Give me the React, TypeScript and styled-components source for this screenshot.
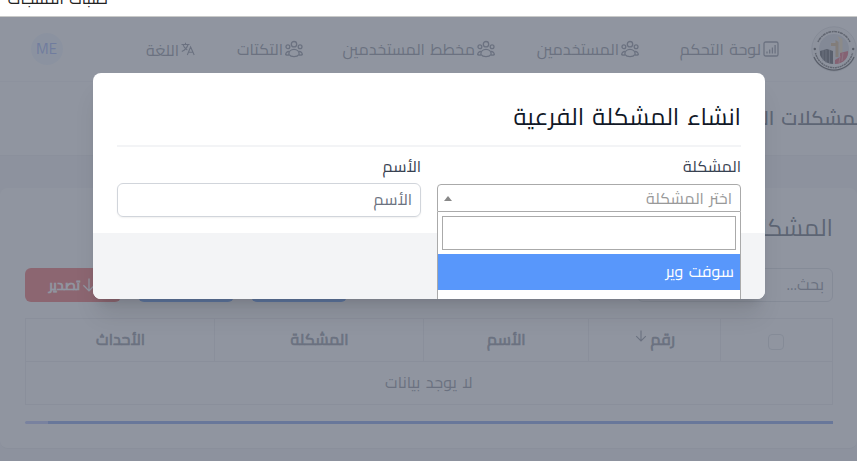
import React from "react";
import styled, { createGlobalStyle, css } from "styled-components";

const Global = createGlobalStyle`
  *, *::before, *::after { box-sizing: border-box; }
  html, body { margin: 0; padding: 0; overflow: hidden; background: #fff; }
  body { font-family: "Cairo", "DejaVu Sans", "Open Sans", sans-serif; font-size: 16px; color: #111827; }
`;

/* A one-line label in a box of fixed width, set against its right edge */
const LabelBox = styled.span<{ $w: number; $size: number; $dy: number }>`
  display: flex;
  flex: none;
  justify-content: flex-end;
  width: ${(p) => p.$w}px;
  font-size: ${(p) => p.$size}px;
  line-height: 24px;
  height: 24px;
  white-space: nowrap;
  word-spacing: 0.12em;
  margin-top: ${(p) => p.$dy}px;
`;
const LabelText = styled.span<{ $heavy?: boolean }>`
  flex: none;
  direction: rtl;
  -webkit-text-stroke: ${(p) => (p.$heavy ? "0.7px currentColor" : "0")};
`;
type LabelProps = { w: number; size?: number; dy?: number; heavy?: boolean; children: string };
function Label({ w, size = 16, dy = 0, heavy, children }: LabelProps) {
  return (
    <LabelBox $w={w} $size={size} $dy={dy}>
      <LabelText $heavy={heavy}>{children}</LabelText>
    </LabelBox>
  );
}

const Root = styled.div`
  width: 857px;
  height: 461px;
  overflow: hidden;
`;
const Strip = styled.div`
  height: 17px;
  overflow: hidden;
  padding-left: 7px;
  border-bottom: 1px solid #c9cac9;
  color: #222;
`;
const Stage = styled.div`
  position: relative;
  height: 444px;
  overflow: hidden;
  background: #f3f4f6;
  color: #6b7280;
`;
const Nav = styled.nav`
  height: 65px;
  display: flex;
  align-items: center;
  padding-left: 31px;
  background: #fff;
  border-bottom: 1px solid #f3f4f6;
`;
const Avatar = styled.div`
  width: 32px;
  height: 32px;
  border-radius: 50%;
  background: #ebf4ff;
  color: #7f9cf5;
  display: flex;
  align-items: center;
  justify-content: center;
`;
const NavItem = styled.div<{ $gap: number }>`
  display: flex;
  align-items: center;
  gap: 2px;
  margin-left: ${(p) => p.$gap}px;
  svg { flex: none; }
`;
const LogoSlot = styled.div`
  width: 46px;
  height: 48px;
  margin-left: 32px;
  svg { display: block; }
`;
const PageHead = styled.header`
  height: 74px;
  display: flex;
  align-items: center;
  background: #fff;
  padding-left: 721px;
  color: #374151;
  font-weight: 600;
  border-bottom: 1px solid #e9eaed;
`;
const Card = styled.section`
  margin-top: 32px;
  height: 261px;
  padding: 28px 24px 0 25px;
  background: #fff;
  border: solid #e5e7eb;
  border-width: 0 0 1px;
  border-radius: 8px;
`;
const CardTitle = styled.div`
  display: flex;
  justify-content: flex-end;
  height: 24px;
  color: #374151;
`;
const Tools = styled.div`
  display: flex;
  height: 34px;
  margin-top: 28px;
`;
const Button = styled.div<{ $red?: boolean }>`
  width: 96px;
  margin-right: 17px;
  border-radius: 6px;
  background: ${(p) => (p.$red ? "#ef4444" : "#3b82f6")};
  color: #fff;
  display: flex;
  align-items: center;
  padding-left: 21px;
  gap: 2px;
`;
const Search = styled.div`
  width: 196px;
  margin-left: auto;
  border: 1px solid #d1d5db;
  border-radius: 6px;
  display: flex;
  align-items: center;
  justify-content: flex-end;
  padding-right: 8px;
`;
const Table = styled.div`
  margin-top: 16px;
  border: 1px solid #e5e7eb;
`;
const Row = styled.div<{ $head?: boolean }>`
  display: grid;
  height: ${(p) => (p.$head ? 43 : 42)}px;
  ${(p) =>
    p.$head
      ? css`
          grid-template-columns: 189px 209px 165px 132px 1fr;
          border-bottom: 1px solid #e5e7eb;
        `
      : css`
          grid-template-columns: 1fr;
        `}
`;
const Cell = styled.div<{ $line?: boolean }>`
  display: flex;
  align-items: center;
  justify-content: center;
  gap: 2px;
  border-right: ${(p) => (p.$line ? "1px solid #e5e7eb" : "0")};
  svg { margin: -9px 0 0 1px; }
`;
const Check = styled.div`
  width: 16px;
  height: 16px;
  margin: 3px 1px 0 0;
  border: 1px solid #d1d5db;
  border-radius: 4px;
`;
const Progress = styled.div`
  height: 3px;
  margin-top: 16px;
  border-radius: 2px;
  background: #a5b4fc;
  padding-left: 23px;
`;
const Bar = styled.div`
  height: 3px;
  background: #6087e8;
`;
const Overlay = styled.div`
  position: absolute;
  inset: 0;
  background: rgba(107, 114, 128, 0.75);
`;
const Modal = styled.div`
  position: absolute;
  left: 93px;
  top: 56px;
  width: 672px;
  height: 226px;
  border-radius: 8px;
  box-shadow: 0 20px 25px -5px rgba(0, 0, 0, 0.1), 0 8px 10px -6px rgba(0, 0, 0, 0.1);
`;
const ModalInner = styled.div`
  position: relative;
  height: 226px;
  border-radius: 8px;
  overflow: hidden;
  background: #fff;
`;
const ModalBody = styled.div`
  height: 160px;
  padding: 32px 24px 0;
`;
const ModalTitle = styled.div`
  height: 42px;
  display: flex;
  justify-content: flex-end;
  border-bottom: 2px solid #f3f4f6;
  color: #111827;
`;
const Fields = styled.div`
  display: grid;
  grid-template-columns: 304px 304px;
  gap: 16px;
  padding-top: 7px;
`;
const Field = styled.div`
  display: flex;
  flex-direction: column;
  align-items: flex-end;
  color: #374151;
`;
const Input = styled.div`
  width: 304px;
  height: 34px;
  margin-top: 5px;
  border: 1px solid #d1d5db;
  border-radius: 6px;
  box-shadow: 0 1px 2px rgba(0, 0, 0, 0.06);
  display: flex;
  align-items: center;
  justify-content: flex-end;
  padding-right: 8px;
  color: #6b7280;
`;
const Select = styled.div`
  width: 304px;
  height: 28px;
  margin-top: 6px;
  border: 1px solid #aaa;
  border-radius: 4px 4px 0 0;
  display: flex;
  align-items: center;
  justify-content: space-between;
  padding: 0 8px 0 6px;
  color: #999;
`;
const Caret = styled.i`
  border: solid transparent;
  border-width: 0 4px 5px;
  border-bottom-color: #888;
`;
const ModalFoot = styled.div`
  height: 66px;
  background: #f3f4f6;
`;
const Dropdown = styled.div`
  position: absolute;
  left: 344px;
  top: 139px;
  width: 304px;
  height: 100px;
  background: #fff;
  border: 1px solid #aaa;
  border-top: 0;
`;
const DropSearch = styled.div`
  height: 34px;
  margin: 4px;
  border: 1px solid #aaa;
`;
const Option = styled.div`
  height: 36px;
  background: #5897fb;
  color: #fff;
  display: flex;
  align-items: center;
  justify-content: flex-end;
  padding-right: 6px;
`;

const Users = () => (
  <svg width="18" height="18" viewBox="0 0 18 18" fill="none" stroke="currentColor" strokeWidth="1.3">
    <circle cx="9" cy="4.200" r="2.700" />
    <circle cx="2.900" cy="6.800" r="1.900" />
    <circle cx="15.100" cy="6.800" r="1.900" />
    <path d="M3.800 14.400C3.800 11.200 6.200 9.300 9 9.300s5.200 1.900 5.200 5.100c-1.200 1.600-3 2.300-5.200 2.300s-4-.7-5.200-2.300Z" />
    <path d="M4.200 11.500C2.100 11.400.8 12.500.7 14.600c.9.500 2 .6 3.200.4M13.800 11.500c2.100-.1 3.400 1 3.500 3.100-.9.500-2 .6-3.200.4" />
  </svg>
);
const Chart = () => (
  <svg width="16" height="16" viewBox="0 0 16 16" fill="none" stroke="currentColor" strokeWidth="1.3">
    <rect x="1" y="1" width="14" height="14" rx="1.6" />
    <path d="M4 12.500v-2M6.700 12.500V8.500M9.400 12.500V6.500M12.100 12.500V4" />
  </svg>
);
const Translate = () => (
  <svg width="14" height="14" viewBox="0 0 14 14" fill="none" stroke="currentColor" strokeWidth="1.1">
    <path d="M.5 2.500h8M4.500.8v1.700M7 2.500C6.300 5.400 4 8 .8 9.600M2 2.700c.7 2.500 2.500 4.400 4.300 5.300M6.300 13l3.300-8 3.600 8M7.500 10.300h4.500" />
  </svg>
);
const Arrow = ({ s = 12 }: { s?: number }) => (
  <svg width={s} height={s} viewBox="0 0 12 12" fill="none" stroke="currentColor" strokeWidth="1.1">
    <path d="M6 .5v10.500M1.200 6.200 6 11l4.800-4.800" />
  </svg>
);
const Logo = () => (
  <svg width="46" height="48" viewBox="0 0 46 48">
    <circle cx="23" cy="24" r="22.200" fill="#f4f4f4" stroke="#c9cccf" strokeWidth=".8" />
    <path d="M3 32a21.800 21.800 0 0 0 40 0" fill="none" stroke="#222" strokeWidth="1.200" />
    <path d="M7 17a17.500 17.500 0 0 1 32 0" fill="none" stroke="#444" strokeWidth="1.500" strokeDasharray="1.800 .5 3 .7" />
    <path d="M4.500 28a19 19 0 0 0 37 0" fill="none" stroke="#444" strokeWidth="1.500" strokeDasharray="1.500 .6 2.200 .5" />
    <circle cx="23" cy="24" r="15" fill="#c9cdd6" />
    <path d="M19.500 37V18l5-3v23Z" fill="#d9d6d6" />
    <path d="M24.500 15l3 2v15h-3Z" fill="#c6a168" />
    <path d="M26.500 11l5 3v14h-3V15Z" fill="#ead3a2" />
    <path d="M9 26l7-2 6 2v13c-6 0-11-4-13-9Z" fill="#272a31" />
    <path d="M12 25v11M15 25v13M18.500 25v14" stroke="#8c9098" strokeWidth=".7" />
    <path d="M24 39v-4l5-3v-4l8-2c1 6-4 13-13 13Z" fill="#d3364b" />
    <path d="M28 38l1-7M31 36l1-8" stroke="#f3a5aa" strokeWidth=".7" />
    <path d="M20 18h5v3h-5Z" fill="#c6a168" />
    <circle cx="3.800" cy="24" r="1.200" fill="#222" />
    <circle cx="42.200" cy="24" r="1.200" fill="#222" />
  </svg>
);

export default function App() {
  return (
    <Root>
      <Global />
      <Strip><Label w={101} dy={-14}>طلبات المنتجات</Label></Strip>
      <Stage>
        <Nav>
          <Avatar><Label w={20} size={15} dy={-1}>ME</Label></Avatar>
          <NavItem $gap={84}><Label w={32} dy={2}>اللغة</Label><Translate /></NavItem>
          <NavItem $gap={41}><Label w={47}>التكتات</Label><Users /></NavItem>
          <NavItem $gap={40}><Label w={132}>مخطط المستخدمين</Label><Users /></NavItem>
          <NavItem $gap={41}><Label w={83}>المستخدمين</Label><Users /></NavItem>
          <NavItem $gap={41}><Label w={81}>لوحة التحكم</Label><Chart /></NavItem>
          <LogoSlot><Logo /></LogoSlot>
        </Nav>
        <PageHead><Label w={146} size={20} dy={-2}>المشكلات الفرعية</Label></PageHead>
        <Card>
          <CardTitle><Label w={176} size={24}>المشكلات الفرعية</Label></CardTitle>
          <Tools>
            <Button $red><Label w={34} size={14} dy={-1} heavy>تصدير</Label><Arrow s={14} /></Button>
            <Button />
            <Button />
            <Search><Label w={40} dy={-2}>بحث...</Label></Search>
          </Tools>
          <Table>
            <Row $head>
              <Cell $line><Label w={50} dy={-2} heavy>الأحداث</Label></Cell>
              <Cell $line><Label w={59} dy={-2} heavy>المشكلة</Label></Cell>
              <Cell $line><Label w={39} dy={-2} heavy>الأسم</Label></Cell>
              <Cell $line><Arrow /><Label w={26} dy={-2} heavy>رقم</Label></Cell>
              <Cell><Check /></Cell>
            </Row>
            <Row><Cell><Label w={87} dy={-2}>لا يوجد بيانات</Label></Cell></Row>
          </Table>
          <Progress><Bar /></Progress>
        </Card>
        <Overlay />
        <Modal>
          <ModalInner>
            <ModalBody>
              <ModalTitle><Label w={228} size={24}>انشاء المشكلة الفرعية</Label></ModalTitle>
              <Fields>
                <Field>
                  <Label w={39}>الأسم</Label>
                  <Input><Label w={39} dy={-2}>الأسم</Label></Input>
                </Field>
                <Field>
                  <Label w={59}>المشكلة</Label>
                  <Select><Caret /><Label w={87}>اختر المشكلة</Label></Select>
                </Field>
              </Fields>
            </ModalBody>
            <ModalFoot />
            <Dropdown>
              <DropSearch />
              <Option><Label w={69} dy={-2}>سوفت وير</Label></Option>
            </Dropdown>
          </ModalInner>
        </Modal>
      </Stage>
    </Root>
  );
}
